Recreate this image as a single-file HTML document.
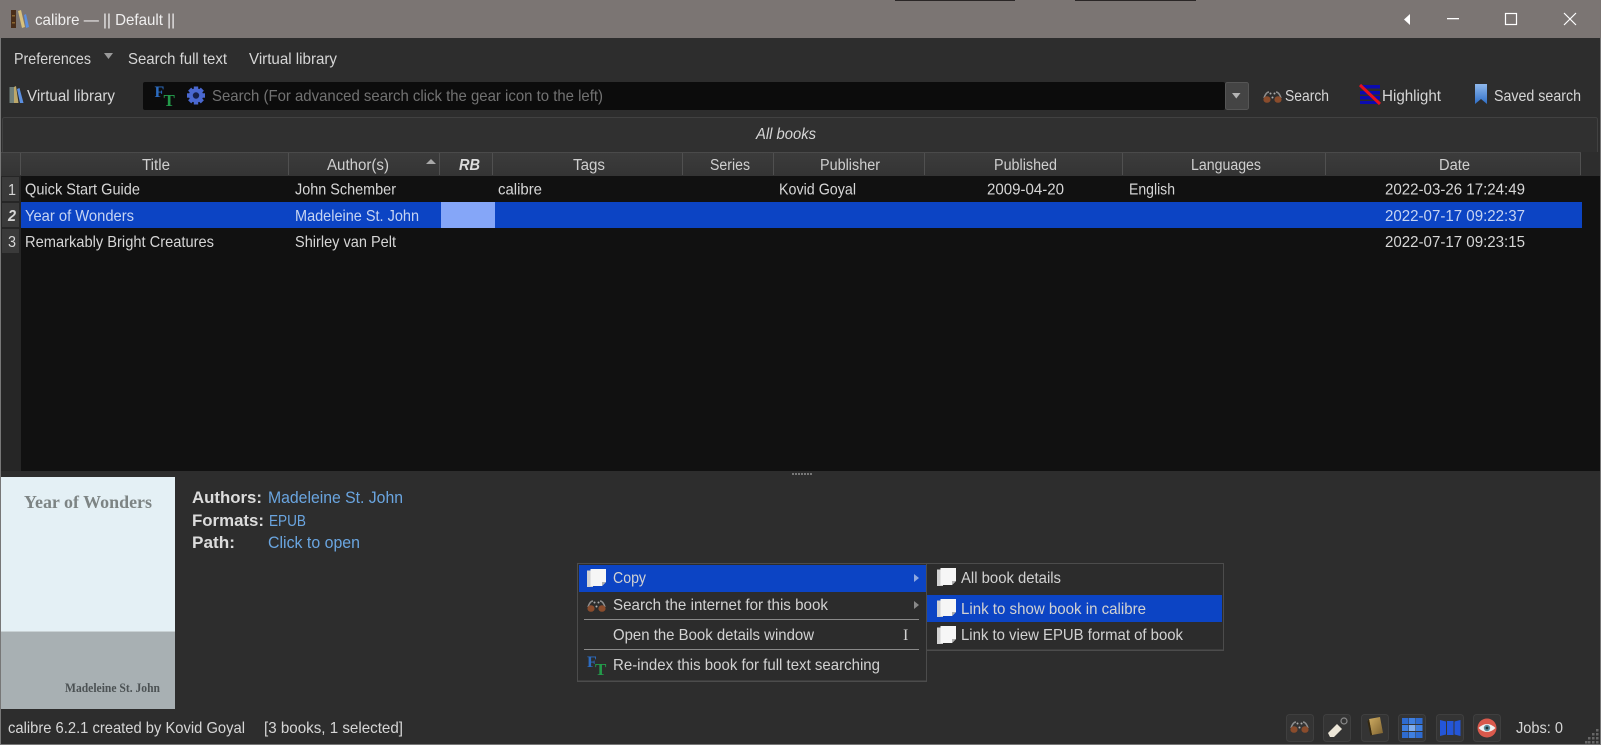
<!DOCTYPE html>
<html><head><meta charset="utf-8"><title>calibre</title>
<style>
html,body{margin:0;padding:0;background:#2d2d2d;width:1601px;height:745px;overflow:hidden}
svg{display:block}
text{font-family:"Liberation Sans",sans-serif;font-size:16px;fill:#d6d6d6}
.h{fill:#cfcfcf;font-size:15.5px}
.s{fill:#c6d4f2}
.l{fill:#6aa5e0;font-size:17px}
.b{font-weight:bold;fill:#dcdcdc;font-size:17px}
.m{fill:#d2d2d2}
</style></head><body>
<svg xmlns="http://www.w3.org/2000/svg" width="1601" height="745" viewBox="0 0 1601 745">
<defs>
<linearGradient id="hd" x1="0" y1="0" x2="0" y2="1"><stop offset="0" stop-color="#3c3c3c"/><stop offset="1" stop-color="#343434"/></linearGradient>
<linearGradient id="bm" x1="0" y1="0" x2="0" y2="1"><stop offset="0" stop-color="#8fb8ec"/><stop offset="1" stop-color="#2f6fc8"/></linearGradient>
<linearGradient id="bk" x1="0" y1="0" x2="1" y2="1"><stop offset="0" stop-color="#d0ad62"/><stop offset="1" stop-color="#7d6230"/></linearGradient>
<g id="copy"><path d="M0 1.500h6v16.500H0z" fill="#d2d2d2"/><path d="M3.500 0h15.500v13l-4 4H3.500z" fill="#f6f6f6"/><path d="M15 17v-4h4z" fill="#b0b0b0"/></g>
<g id="bino"><path d="M1 8Q3 2 6 2M18 8Q16 2 13 2" stroke="#8f8f8f" stroke-width="1.500" fill="none"/><ellipse cx="4" cy="9.500" rx="3.600" ry="3.300" fill="#8a4c2c"/><ellipse cx="15" cy="9.500" rx="3.600" ry="3.300" fill="#8a4c2c"/><circle cx="9.500" cy="7.500" r="1" fill="#b0b0b0"/><circle cx="7.500" cy="3.500" r="1" fill="#aaa"/><circle cx="11.500" cy="3.500" r="1" fill="#aaa"/></g>
<g id="ft"><text x="0" y="11" style="font-family:'Liberation Serif',serif;font-size:16px;font-weight:bold;fill:#2c6cc0">F</text><text x="8" y="19" style="font-family:'Liberation Serif',serif;font-size:17px;font-weight:bold;fill:#239a4a">T</text></g>
</defs>

<!-- window frame -->
<rect width="1601" height="745" fill="#2d2d2d"/>
<rect width="1601" height="38" fill="#7b7573"/>
<rect x="895" y="0" width="120" height="1" fill="#2a2626"/>
<rect x="1075" y="0" width="121" height="1" fill="#2a2626"/>
<rect x="0" y="38" width="1" height="707" fill="#777"/>
<rect x="1600" y="38" width="1" height="707" fill="#777"/>
<rect x="0" y="744" width="1601" height="1" fill="#777"/>

<!-- app icon -->
<rect x="11" y="10" width="5" height="18" fill="#4a2e1a"/><rect x="12" y="15" width="3" height="1.500" fill="#8a6530"/><rect x="12" y="22" width="3" height="1.500" fill="#8a6530"/>
<path d="M18 11l3-1 4 17-3 1z" fill="#d8c17c"/>
<path d="M24 15l2-1 3 13-3 1z" fill="#5b8fe0"/>
<text x="35" y="25" textLength="140" lengthAdjust="spacingAndGlyphs" style="fill:#f0efef">calibre — || Default ||</text>

<!-- window controls -->
<path d="M1410 14v11l-6-5.500z" fill="#fff"/>
<rect x="1447" y="18" width="12" height="1.300" fill="#fff"/>
<rect x="1505.500" y="13.500" width="11" height="11" fill="none" stroke="#fff" stroke-width="1.200"/>
<path d="M1564 13l12 12M1576 13l-12 12" stroke="#fff" stroke-width="1.200"/>

<!-- menu row -->
<text x="14" y="64" textLength="77" lengthAdjust="spacingAndGlyphs">Preferences</text>
<path d="M104 53h9l-4.500 6z" fill="#9a9a9a"/>
<text x="128" y="64" textLength="99" lengthAdjust="spacingAndGlyphs">Search full text</text>
<text x="249" y="64" textLength="88" lengthAdjust="spacingAndGlyphs">Virtual library</text>

<!-- search row -->
<path d="M9.500 87h4.500v16H9.500z" fill="#6f7f7a"/><path d="M14 87l2-1 2.500 17H14z" fill="#bda86a"/><path d="M17 89l2.500-1 4 15H20z" fill="#5b8fe0"/>
<text x="27" y="101" textLength="88" lengthAdjust="spacingAndGlyphs">Virtual library</text>
<rect x="143" y="82" width="1082" height="28" rx="2" fill="#0c0c0c"/>
<rect x="1225.500" y="82.500" width="23" height="27" rx="2" fill="#444" stroke="#555"/>
<path d="M1232 93h8.500l-4.200 5.500z" fill="#b5b5b5"/>
<text x="154.500" y="97" style="font-family:'Liberation Serif',serif;font-size:16px;font-weight:bold;fill:#2c6cc0">F</text>
<text x="163.500" y="106" style="font-family:'Liberation Serif',serif;font-size:17px;font-weight:bold;fill:#239a4a">T</text>
<g transform="translate(196 95.500)" fill="#4a68d0"><circle r="5" fill="none" stroke="#4a68d0" stroke-width="4.200"/><rect x="-2.200" y="-9" width="4.400" height="18"/><rect x="-2.200" y="-9" width="4.400" height="18" transform="rotate(45)"/><rect x="-2.200" y="-9" width="4.400" height="18" transform="rotate(90)"/><rect x="-2.200" y="-9" width="4.400" height="18" transform="rotate(135)"/><circle r="3.200" fill="#16204a"/></g>
<text x="212" y="101" textLength="391" lengthAdjust="spacingAndGlyphs" style="fill:#727272">Search (For advanced search click the gear icon to the left)</text>
<use href="#bino" x="1263" y="90"/>
<text x="1285" y="101" textLength="44" lengthAdjust="spacingAndGlyphs">Search</text>
<g fill="#0b0bb0"><rect x="1360" y="85" width="20" height="3.500"/><rect x="1360" y="91" width="20" height="3.500"/><rect x="1360" y="96" width="20" height="3.500"/><rect x="1360" y="101" width="20" height="3"/></g>
<path d="M1360 85l20 19" stroke="#e8101c" stroke-width="3"/>
<text x="1382" y="101" textLength="59" lengthAdjust="spacingAndGlyphs">Highlight</text>
<path d="M1475 84h12v20l-6-5-6 5z" fill="url(#bm)"/>
<text x="1494" y="101" textLength="87" lengthAdjust="spacingAndGlyphs">Saved search</text>

<!-- all books bar -->
<rect x="2.500" y="117.500" width="1595" height="40" rx="2" fill="#303030" stroke="#414141"/>
<text x="756" y="139" textLength="60" lengthAdjust="spacingAndGlyphs" style="font-style:italic">All books</text>

<!-- table -->
<rect x="1" y="152" width="1599" height="24" fill="url(#hd)"/>
<rect x="1" y="152" width="1599" height="1" fill="#4a4a4a"/>
<rect x="1581" y="152" width="19" height="24" fill="#2d2d2d"/>
<g fill="#505050"><rect x="20" y="153" width="1" height="22"/><rect x="288" y="153" width="1" height="22"/><rect x="439" y="153" width="1" height="22"/><rect x="492" y="153" width="1" height="22"/><rect x="682" y="153" width="1" height="22"/><rect x="773" y="153" width="1" height="22"/><rect x="924" y="153" width="1" height="22"/><rect x="1122" y="153" width="1" height="22"/><rect x="1325" y="153" width="1" height="22"/><rect x="1580" y="153" width="1" height="22"/></g>
<text class="h" x="142" y="170" textLength="28" lengthAdjust="spacingAndGlyphs">Title</text>
<text class="h" x="327" y="170" textLength="62" lengthAdjust="spacingAndGlyphs">Author(s)</text>
<path d="M426 164l5-5 5 5z" fill="#a8a8a8"/>
<text class="h" x="459" y="170" textLength="21" lengthAdjust="spacingAndGlyphs" style="font-weight:bold;font-style:italic;fill:#dcdcdc;font-family:'Liberation Sans',sans-serif">RB</text>
<text class="h" x="573" y="170" textLength="32" lengthAdjust="spacingAndGlyphs">Tags</text>
<text class="h" x="710" y="170" textLength="40" lengthAdjust="spacingAndGlyphs">Series</text>
<text class="h" x="820" y="170" textLength="60" lengthAdjust="spacingAndGlyphs">Publisher</text>
<text class="h" x="994" y="170" textLength="63" lengthAdjust="spacingAndGlyphs">Published</text>
<text class="h" x="1191" y="170" textLength="70" lengthAdjust="spacingAndGlyphs">Languages</text>
<text class="h" x="1439" y="170" textLength="31" lengthAdjust="spacingAndGlyphs">Date</text>

<rect x="21" y="176" width="1560" height="295" fill="#111"/>
<rect x="1581" y="176" width="19" height="295" fill="#111"/>
<rect x="1" y="176" width="20" height="295" fill="#262626"/>
<rect x="2" y="177" width="17" height="24" fill="#3a3a3a"/>
<rect x="2" y="203" width="17" height="24" fill="#3a3a3a"/>
<rect x="2" y="229" width="17" height="24" fill="#3a3a3a"/>
<rect x="21" y="202" width="1561" height="26" fill="#0c44c4"/>
<rect x="441" y="202" width="54" height="26" fill="#85a6f8"/>
<text x="8" y="195" textLength="8" lengthAdjust="spacingAndGlyphs">1</text>
<text x="8" y="221" textLength="8" lengthAdjust="spacingAndGlyphs" style="font-weight:bold;font-style:italic">2</text>
<text x="8" y="247" textLength="8" lengthAdjust="spacingAndGlyphs">3</text>

<text x="25" y="194.500" textLength="115" lengthAdjust="spacingAndGlyphs">Quick Start Guide</text>
<text x="295" y="194.500" textLength="101" lengthAdjust="spacingAndGlyphs">John Schember</text>
<text x="498" y="194.500" textLength="44" lengthAdjust="spacingAndGlyphs">calibre</text>
<text x="779" y="194.500" textLength="77" lengthAdjust="spacingAndGlyphs">Kovid Goyal</text>
<text x="987" y="194.500" textLength="77" lengthAdjust="spacingAndGlyphs">2009-04-20</text>
<text x="1129" y="194.500" textLength="46" lengthAdjust="spacingAndGlyphs">English</text>
<text x="1385" y="194.500" textLength="140" lengthAdjust="spacingAndGlyphs">2022-03-26 17:24:49</text>

<text class="s" x="25" y="221" textLength="109" lengthAdjust="spacingAndGlyphs">Year of Wonders</text>
<text class="s" x="295" y="221" textLength="124" lengthAdjust="spacingAndGlyphs">Madeleine St. John</text>
<text class="s" x="1385" y="221" textLength="140" lengthAdjust="spacingAndGlyphs">2022-07-17 09:22:37</text>

<text x="25" y="247" textLength="189" lengthAdjust="spacingAndGlyphs">Remarkably Bright Creatures</text>
<text x="295" y="247" textLength="101" lengthAdjust="spacingAndGlyphs">Shirley van Pelt</text>
<text x="1385" y="247" textLength="140" lengthAdjust="spacingAndGlyphs">2022-07-17 09:23:15</text>

<!-- splitter -->
<g fill="#777"><rect x="792" y="473" width="2" height="2"/><rect x="795" y="473" width="2" height="2"/><rect x="798" y="473" width="2" height="2"/><rect x="801" y="473" width="2" height="2"/><rect x="804" y="473" width="2" height="2"/><rect x="807" y="473" width="2" height="2"/><rect x="810" y="473" width="2" height="2"/></g>

<!-- cover -->
<rect x="1" y="477" width="174" height="155" fill="#e4f0f5"/>
<rect x="1" y="632" width="174" height="77" fill="#a8b0b3"/>
<rect x="1" y="631" width="174" height="1" fill="#c9d2d5"/>
<text x="24" y="508" textLength="128" lengthAdjust="spacingAndGlyphs" style="font-family:'Liberation Serif',serif;font-weight:bold;font-size:17.500px;fill:#7d8484">Year of Wonders</text>
<text x="65" y="692" textLength="95" lengthAdjust="spacingAndGlyphs" style="font-family:'Liberation Serif',serif;font-weight:bold;font-size:12.500px;fill:#4c5254">Madeleine St. John</text>

<!-- details -->
<text class="b" x="192" y="503" textLength="70" lengthAdjust="spacingAndGlyphs">Authors:</text>
<text class="l" x="268" y="503" textLength="135" lengthAdjust="spacingAndGlyphs">Madeleine St. John</text>
<text class="b" x="192" y="526" textLength="72" lengthAdjust="spacingAndGlyphs">Formats:</text>
<text class="l" x="269" y="526" textLength="37" lengthAdjust="spacingAndGlyphs" style="font-size:16px">EPUB</text>
<text class="b" x="192" y="548" textLength="43" lengthAdjust="spacingAndGlyphs">Path:</text>
<text class="l" x="268" y="548" textLength="92" lengthAdjust="spacingAndGlyphs">Click to open</text>

<!-- context menu -->
<rect x="577" y="563" width="350" height="119" fill="#4c4c4c"/>
<rect x="578" y="564" width="348" height="116.500" fill="#2c2c2c"/>
<rect x="579" y="565" width="347" height="27" fill="#0c44c4"/>
<use href="#copy" x="587" y="569"/>
<text class="m" x="613" y="583" textLength="33" lengthAdjust="spacingAndGlyphs">Copy</text>
<path d="M914 574l5 4-5 4z" fill="#8fa8e0"/>
<use href="#bino" x="587" y="599"/>
<text class="m" x="613" y="610" textLength="215" lengthAdjust="spacingAndGlyphs">Search the internet for this book</text>
<path d="M914 601l5 4-5 4z" fill="#888"/>
<rect x="584" y="619" width="335" height="1" fill="#8a8a8a"/>
<text class="m" x="613" y="640" textLength="201" lengthAdjust="spacingAndGlyphs">Open the Book details window</text>
<text class="m" x="903" y="640" style="font-family:'Liberation Serif',serif">I</text>
<rect x="584" y="649" width="335" height="1" fill="#8a8a8a"/>
<use href="#ft" x="587" y="656"/>
<text class="m" x="613" y="670" textLength="267" lengthAdjust="spacingAndGlyphs">Re-index this book for full text searching</text>

<!-- submenu -->
<rect x="926" y="563" width="298" height="88" fill="#4c4c4c"/>
<rect x="927" y="564" width="296" height="85.500" fill="#2c2c2c"/>
<use href="#copy" x="937" y="568"/>
<text class="m" x="961" y="583" textLength="100" lengthAdjust="spacingAndGlyphs">All book details</text>
<rect x="927" y="595" width="295" height="27" fill="#0c44c4"/>
<use href="#copy" x="937" y="599"/>
<text class="m" x="961" y="614" textLength="185" lengthAdjust="spacingAndGlyphs">Link to show book in calibre</text>
<use href="#copy" x="937" y="626"/>
<text class="m" x="961" y="640" textLength="222" lengthAdjust="spacingAndGlyphs">Link to view EPUB format of book</text>

<!-- status bar -->
<text x="8" y="733" textLength="237" lengthAdjust="spacingAndGlyphs">calibre 6.2.1 created by Kovid Goyal</text>
<text x="264" y="733" textLength="139" lengthAdjust="spacingAndGlyphs">[3 books, 1 selected]</text>
<g fill="#343434" stroke="#3f3f3f"><rect x="1286.500" y="714.500" width="27" height="27" rx="3"/><rect x="1323.500" y="714.500" width="27" height="27" rx="3"/><rect x="1361.500" y="714.500" width="27" height="27" rx="3"/><rect x="1398.500" y="714.500" width="27" height="27" rx="3"/><rect x="1436.500" y="714.500" width="27" height="27" rx="3"/><rect x="1473.500" y="714.500" width="27" height="27" rx="3"/></g>
<use href="#bino" x="1290" y="720"/>
<path d="M1328 733l9-9 5 5-8 8h-4z" fill="#ece6d8"/><circle cx="1344" cy="721" r="3" fill="none" stroke="#8a8a8a" stroke-width="1.200"/>
<path d="M1369 719l11-2 3 16-11 2z" fill="url(#bk)"/><path d="M1369 719l3 16-1.500.500-3-14z" fill="#33270f"/>
<g fill="#2e6bd0"><rect x="1402" y="718" width="6.500" height="6"/><rect x="1409" y="718" width="6.500" height="6" fill="#3f7fe0"/><rect x="1416" y="718" width="6.500" height="6"/><rect x="1402" y="725" width="6.500" height="6" fill="#3f7fe0"/><rect x="1409" y="725" width="6.500" height="6" fill="#7fadee"/><rect x="1416" y="725" width="6.500" height="6" fill="#3f7fe0"/><rect x="1402" y="732" width="6.500" height="6"/><rect x="1409" y="732" width="6.500" height="6" fill="#3f7fe0"/><rect x="1416" y="732" width="6.500" height="6"/></g>
<path d="M1440 720l6 1.500v13l-6 1.500zM1447 721h6.500v14H1447zM1454.500 721.500l6-1.500v16l-6-1.500z" fill="#2456d8"/>
<circle cx="1487" cy="728" r="9.500" fill="#d9594c"/>
<path d="M1478.500 728q8.500-8 17 0q-8.500 8-17 0z" fill="#eef2f2"/><circle cx="1487" cy="728" r="3.200" fill="#5a8c9c"/><circle cx="1487" cy="728" r="1.400" fill="#233"/>
<text x="1516" y="733" textLength="47" lengthAdjust="spacingAndGlyphs">Jobs: 0</text>
<g fill="#666"><rect x="1596" y="729" width="2.500" height="2.500"/><rect x="1592" y="733" width="2.500" height="2.500"/><rect x="1596" y="733" width="2.500" height="2.500"/><rect x="1588" y="737" width="2.500" height="2.500"/><rect x="1592" y="737" width="2.500" height="2.500"/><rect x="1596" y="737" width="2.500" height="2.500"/><rect x="1585" y="741" width="2.500" height="2.500"/><rect x="1588" y="741" width="2.500" height="2.500"/><rect x="1592" y="741" width="2.500" height="2.500"/><rect x="1596" y="741" width="2.500" height="2.500"/></g>
</svg>
</body></html>
